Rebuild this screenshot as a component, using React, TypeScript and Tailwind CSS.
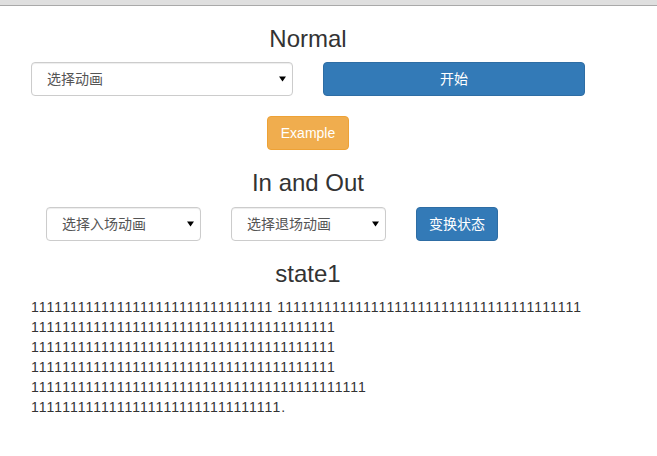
import { useState } from 'react';

const FONT = "[font-family:'Liberation_Sans','Noto_Sans_CJK_SC',sans-serif]";

function Arrow() {
    return (
        <svg className="pointer-events-none absolute right-[7px] top-1/2 -translate-y-1/2" width="7" height="6" viewBox="0 0 7 6">
            <polygon points="0,0.5 7,0.5 3.5,5.5" fill="#000" />
        </svg>
    );
}

function Select({ options, className }: { options: string[]; className: string }) {
    const [value, setValue] = useState(options[0]);
    return (
        <div className={`relative ${className}`}>
            <select
                value={value}
                onChange={(e) => setValue(e.target.value)}
                className="block h-[34px] w-full appearance-none rounded-[4px] border border-[#ccc] bg-white pl-[15px] pr-6 text-[14px] leading-[20px] text-[#555] shadow-[inset_0_1px_1px_rgba(0,0,0,0.075)] outline-none"
            >
                {options.map((o) => (
                    <option key={o} value={o}>{o}</option>
                ))}
            </select>
            <Arrow />
        </div>
    );
}

// each entry is one unbroken "word"; the browser wraps between them
const words = [
    '1'.repeat(31),
    '1'.repeat(39),
    '1'.repeat(39),
    '1'.repeat(39),
    '1'.repeat(39),
    '1'.repeat(43),
    '1'.repeat(32) + '.',
];

export default function App() {
    const [state, setState] = useState(1);

    return (
        <div className={`${FONT} min-h-[456px] bg-white text-[14px] leading-[20px] text-[#333]`}>
            <div className="h-[6px] border-b border-[#a9a9a9] bg-[#dfdfdf]" />

            <div className="ml-[16px] w-[584px]">
                <h3 className="mt-[20px] mb-[10px] text-center text-[24px] leading-[1.1] font-medium">Normal</h3>
                <div className="grid grid-cols-2">
                    <div className="px-[15px]">
                        <Select options={['选择动画', 'fadeIn', 'bounce']} className="w-full" />
                    </div>
                    <div className="px-[15px]">
                        <button className="h-[34px] w-full rounded-[4px] border border-[#2e6da4] bg-[#337ab7] px-[12px] text-white">开始</button>
                    </div>
                </div>
                <div className="mt-[20px] flex justify-center">
                    <button className="h-[34px] rounded-[4px] border border-[#eea236] bg-[#f0ad4e] px-[13px] text-white">Example</button>
                </div>

                <h3 className="mt-[20px] mb-[10px] text-center text-[24px] leading-[1.1] font-medium">In and Out</h3>
                <div className="flex gap-[30px] pl-[30px]">
                    <Select options={['选择入场动画', 'fadeIn', 'slideIn']} className="w-[155px]" />
                    <Select options={['选择退场动画', 'fadeOut', 'slideOut']} className="w-[155px]" />
                    <button
                        onClick={() => setState(state === 1 ? 2 : 1)}
                        className="h-[34px] rounded-[4px] border border-[#2e6da4] bg-[#337ab7] px-[12px] text-white"
                    >
                        变换状态
                    </button>
                </div>

                <h3 className="mt-[20px] mb-[10px] text-center text-[24px] leading-[1.1] font-medium">state{state}</h3>
                <p className="px-[15px] tracking-[1.04px] [word-spacing:-1px]">{words.join(' ')}</p>
            </div>
        </div>
    );
}
